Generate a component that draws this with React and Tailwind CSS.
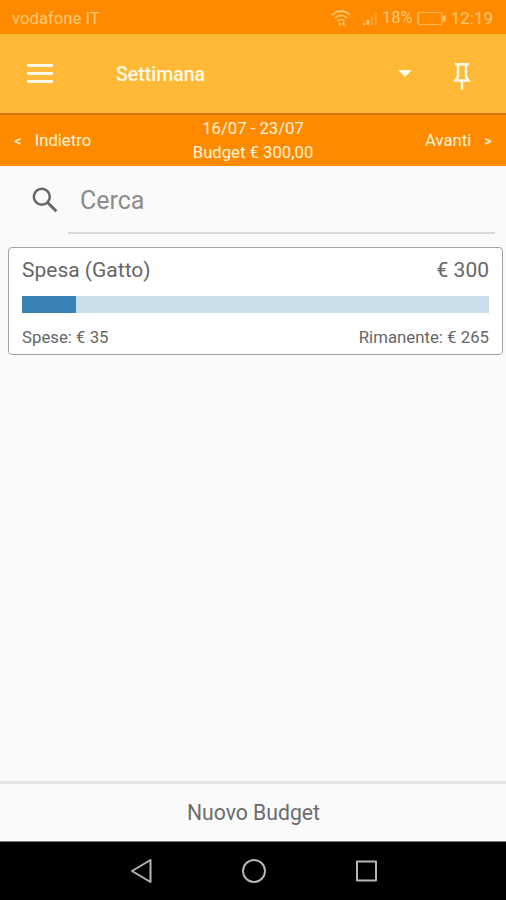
import React, { useState } from 'react';

const budgets = [
  { id: 1, name: 'Spesa (Gatto)', total: 300, spent: 35 },
];

const StatusBar = () => (
  <div className="flex h-[34px] items-center bg-[#ff8a00] pl-3 pr-[13px] pt-[2px] text-[17px] text-[#ffc774]">
    <span className="pt-px text-[16.7px]">vodafone IT</span>
    <svg className="ml-auto h-[16px] w-[20px]" viewBox="0 0 20 16" fill="none" stroke="currentColor" strokeWidth="1.7">
      <path d="M1 5.2C6-.2 14-.2 19 5.2M3.8 8.2c3.5-3.6 8.900-3.600 12.400 0M6.500 11c2-2 5-2 7 0" />
      <path d="M8.800 12.500v3M12.500 12v3.500" strokeWidth="2" />
    </svg>
    <svg className="ml-[11px] h-[15px] w-[16px]" viewBox="0 0 16 15" fill="currentColor">
      <path d="M1 12h2v2H1zM4.500 9h2.500v5H4.500z" />
      <path d="M8.500 5.500h2.500V14H8.500zM12.500 1H15v13h-2.500z" opacity=".3" />
    </svg>
    <span className="ml-[4px] pt-px text-[16.5px]">18%</span>
    <svg className="ml-[4px] h-[15px] w-[30px]" viewBox="0 0 30 15" fill="none" stroke="currentColor" strokeWidth="1.2">
      <rect x="1" y="1.500" width="24" height="12" rx="1.500" opacity=".75" />
      <path d="M1.500 2v11" opacity=".6" />
      <path d="M27.500 4.500v6" strokeWidth="2.500" />
    </svg>
    <span className="ml-[4px] pt-px">12:19</span>
  </div>
);

const Toolbar = () => (
  <header className="flex h-[79px] items-center bg-[#ffb936] text-[#fffbe9]">
    <button type="button" aria-label="Menu" className="ml-[27px] flex w-[26px] flex-col gap-[5px]">
      <span className="h-[3px] bg-current"></span>
      <span className="h-[3px] bg-current"></span>
      <span className="h-[3px] bg-current"></span>
    </button>
    <span className="ml-[63px] pt-[2px] text-[19.5px] font-medium">Settimana</span>
    <svg className="ml-auto h-[7px] w-[14px]" viewBox="0 0 14 7" fill="currentColor">
      <path d="M0 0h14L7 7z" />
    </svg>
    <svg className="ml-[41px] mr-[35px] mt-[5px] h-[28px] w-[18px]" viewBox="0 0 18 28" fill="none" stroke="currentColor" strokeWidth="2.500">
      <path d="M2 2.300h14M5 2.500v12L2.500 18.500h13L13 14.500v-12M9 19v8.500" />
    </svg>
  </header>
);

const PeriodBar = () => (
  <div className="grid h-[53px] grid-cols-[1fr_auto_1fr] items-center border-t-2 border-[#d4740a] bg-[#ff8a00] text-[16.700px] text-[#fff3d6]">
    <button type="button" className="flex items-center pl-[14px] pt-px">
      <span className="text-[15px] font-medium">&lt;</span>
      <span className="ml-[13px]">Indietro</span>
    </button>
    <div className="text-center leading-[24px]">
      <p>16/07 - 23/07</p>
      <p>Budget € 300,00</p>
    </div>
    <button type="button" className="flex items-center justify-end pr-[14px] pt-px">
      <span>Avanti</span>
      <span className="ml-[13px] text-[15px] font-medium">&gt;</span>
    </button>
  </div>
);

const BudgetCard = ({ budget }) => {
  const percent = (budget.spent / budget.total) * 100;
  return (
    <div className="ml-[8px] mr-[3px] h-[108px] rounded-[4px] border-[1.500px] border-[#a3a3a3] bg-white px-[13px] pt-[8px] text-[#666]">
      <div className="flex justify-between text-[21px] leading-[28px]">
        <span>{budget.name}</span>
        <span>€ {budget.total}</span>
      </div>
      <div className="mt-[12px] h-[17px] bg-[#cbdfeb]">
        <div className="h-full bg-[#3a83b9]" style={{ width: `${percent}%` }}></div>
      </div>
      <div className="mt-[12px] flex justify-between text-[16.800px] leading-[24px]">
        <span>Spese: € {budget.spent}</span>
        <span>Rimanente: € {budget.total - budget.spent}</span>
      </div>
    </div>
  );
};

const NavBar = () => (
  <nav className="flex h-[59px] items-center justify-center gap-[88px] border-t border-[#777] bg-black pl-px text-[#b5b5b5]">
    <svg className="h-[26px] w-[24px]" viewBox="0 0 24 26" fill="none" stroke="currentColor" strokeWidth="2" strokeLinejoin="round">
      <path d="M21.500 2v22L3 13z" />
    </svg>
    <svg className="h-[26px] w-[26px]" viewBox="0 0 26 26" fill="none" stroke="currentColor" strokeWidth="2">
      <circle cx="13" cy="13" r="11" />
    </svg>
    <svg className="h-[26px] w-[24px]" viewBox="0 0 24 26" fill="none" stroke="currentColor" strokeWidth="2" strokeLinejoin="round">
      <rect x="2" y="3.500" width="19" height="19" />
    </svg>
  </nav>
);

const App = () => {
  const [search, setSearch] = useState('');

  return (
    <div className="flex h-screen flex-col overflow-hidden bg-[#fafafa] font-['Roboto',sans-serif]">
      <StatusBar />
      <Toolbar />
      <PeriodBar />
      <main className="flex-1">
        <div className="flex h-[81px] items-start">
          <svg className="ml-[32px] mt-[21px] h-[26px] w-[26px] text-[#666]" viewBox="0 0 26 26" fill="none" stroke="currentColor">
            <circle cx="9.800" cy="9.800" r="8" strokeWidth="2.500" />
            <path d="M15.800 15.800l8.500 8.500" strokeWidth="3" />
          </svg>
          <input
            type="text"
            placeholder="Cerca"
            value={search}
            onChange={(e) => setSearch(e.target.value)}
            className="ml-[10px] mr-[11px] h-[68px] min-w-0 flex-1 border-b-2 border-[#d8d8d8] pl-[12px] pt-[2px] text-[25px] text-[#666] outline-none placeholder:text-[#8c8c8c]"
          />
        </div>
        {budgets.map((budget) => (
          <BudgetCard key={budget.id} budget={budget} />
        ))}
      </main>
      <button type="button" className="h-[60px] border-t-[3px] border-[#e5e5e5] pl-px text-[21.200px] text-[#6c6c6c]">
        Nuovo Budget
      </button>
      <NavBar />
    </div>
  );
};

export default App;
